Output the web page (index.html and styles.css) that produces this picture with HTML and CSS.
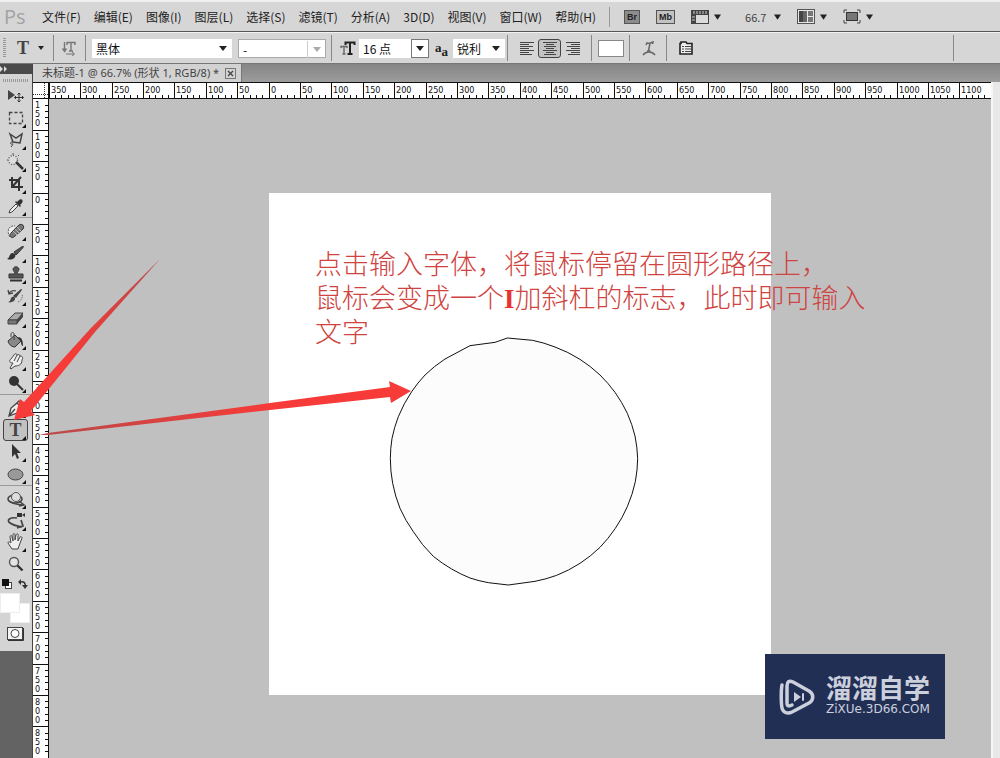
FILE: index.html
```html
<!DOCTYPE html>
<html lang="zh-CN">
<head>
<meta charset="utf-8">
<title>Ps</title>
<link rel="stylesheet" href="styles.css">
</head>
<body>
<div class="app">
  <header class="menubar">
    <span class="brand">Ps</span>
    <nav class="menus">
      <button class="menu">文件(F)</button><button class="menu">编辑(E)</button><button class="menu">图像(I)</button><button class="menu">图层(L)</button><button class="menu">选择(S)</button><button class="menu">滤镜(T)</button><button class="menu">分析(A)</button><button class="menu">3D(D)</button><button class="menu">视图(V)</button><button class="menu">窗口(W)</button><button class="menu">帮助(H)</button>
    </nav>
    <div class="launch">
      <button class="badge" aria-label="Bridge"><span class="br">Br</span></button>
      <button class="badge" aria-label="Mini Bridge"><span class="mb">Mb</span></button>
      <button class="drop" aria-label="查看额外内容">
        <svg width="18" height="14" viewBox="0 0 18 14"><rect x="0" y="0" width="18" height="14" fill="#444"/><rect x="5" y="5" width="12" height="8" fill="#dcdcdc"/><path d="M3 1v3M6 1v3M9 1v3M12 1v3M15 1v3M1 7h3M1 10h3" stroke="#ccc"/></svg>
        <svg class="caret" width="7" height="6" viewBox="0 0 8 6"><path d="M0 0h8L4 6z"/></svg>
      </button>
      <button class="drop zoomlevel"><span>66.7</span>
        <svg class="caret" width="7" height="6" viewBox="0 0 8 6"><path d="M0 0h8L4 6z"/></svg>
      </button>
      <button class="drop" aria-label="排列文档">
        <svg width="18" height="15" viewBox="0 0 18 15"><rect x=".5" y=".5" width="17" height="14" fill="#e8e8e8" stroke="#555"/><rect x="2" y="2" width="4" height="11" fill="#444"/><rect x="6" y="2" width="4" height="11" fill="#666"/><rect x="11" y="2" width="5" height="5" fill="#777"/><rect x="11" y="8" width="5" height="5" fill="#777"/></svg>
        <svg class="caret" width="7" height="6" viewBox="0 0 8 6"><path d="M0 0h8L4 6z"/></svg>
      </button>
      <button class="drop" aria-label="屏幕模式">
        <svg width="18" height="15" viewBox="0 0 18 15"><path d="M1 4V1h3M14 1h3v3M17 11v3h-3M4 14H1v-3" fill="none" stroke="#444"/><rect x="3.500" y="3.500" width="11" height="8" fill="#777" stroke="#333"/></svg>
        <svg class="caret" width="7" height="6" viewBox="0 0 8 6"><path d="M0 0h8L4 6z"/></svg>
      </button>
    </div>
  </header>

  <div class="options">
    <div class="opt opt-tool"><span class="grip-v"></span>
      <button class="flat"><span class="serif-t">T</span><svg class="caret" width="6" height="4" viewBox="0 0 6 4"><path d="M0 0h6L3 4z"/></svg></button>
    </div>
    <div class="opt opt-orient">
      <button class="flat" aria-label="切换文本取向"><svg width="14" height="15" viewBox="0 0 14 15" fill="none" stroke="#777"><path d="M2.500 1v9M.5 7.500l2 3 2-3M5 4V1.500h8V4M9 1.500V10M7 10h4" stroke-width="1.400"/><path d="M4 13h8M10 11l2.500 2L10 15"/></svg></button>
    </div>
    <div class="opt opt-font">
      <label class="pick pick-family"><select aria-label="字体"><option>黑体</option></select><svg class="caret" width="8" height="5" viewBox="0 0 8 5"><path d="M0 0h8L4 5z"/></svg></label>
      <label class="pick pick-style"><select aria-label="字体样式"><option>-</option></select><span class="dropbox"><svg class="caret" width="8" height="5" viewBox="0 0 8 5"><path d="M0 0h8L4 5z"/></svg></span></label>
    </div>
    <div class="opt opt-size">
      <svg width="16" height="14" viewBox="0 0 16 14" fill="none"><path d="M1 7V5.500h6V7M4 5.500V13M2.500 13h3" stroke="#666" stroke-width="1.400"/><path d="M5.500 4V1.500h9V4M10 1v11.500M7.500 13h5" stroke="#222" stroke-width="2"/></svg>
      <label class="pick pick-size"><select aria-label="字体大小"><option>16 点</option></select><span class="dropbox"><svg class="caret" width="8" height="5" viewBox="0 0 8 5"><path d="M0 0h8L4 5z"/></svg></span></label>
      <span class="aa">a<sub>a</sub></span>
      <label class="pick pick-aa"><select aria-label="消除锯齿"><option>锐利</option></select><svg class="caret" width="8" height="5" viewBox="0 0 8 5"><path d="M0 0h8L4 5z"/></svg></label>
    </div>
    <div class="opt opt-align">
      <button class="align" aria-label="左对齐"><svg width="14" height="13" viewBox="0 0 14 13"><path d="M0 .5h14M0 2.500h9M0 4.500h13M0 6.500h9M0 8.500h14M0 10.500h9M0 12.500h12" stroke="#444"/></svg></button>
      <button class="align on" aria-label="居中"><svg width="14" height="13" viewBox="0 0 14 13"><path d="M0 .5h14M3 2.500h8M1 4.500h12M3 6.500h8M0 8.500h14M3 10.500h8M1 12.500h12" stroke="#444"/></svg></button>
      <button class="align" aria-label="右对齐"><svg width="14" height="13" viewBox="0 0 14 13"><path d="M0 .5h14M5 2.500h9M1 4.500h13M5 6.500h9M0 8.500h14M5 10.500h9M2 12.500h12" stroke="#444"/></svg></button>
    </div>
    <div class="opt opt-color"><button class="textcolor" aria-label="文本颜色"></button></div>
    <div class="opt opt-warp"><button class="flat" aria-label="变形文字"><svg width="14" height="15" viewBox="0 0 14 15" fill="none" stroke="#666"><path d="M4 4l1-2c2 1 3 0 6-1l-.5 2M8 2L6.500 10M5 10h3.500" stroke-width="1.500"/><path d="M1 14c3-4 9-4 12 0" stroke-width="1.400"/></svg></button></div>
    <div class="opt opt-panel"><button class="flat" aria-label="字符面板"><svg width="14" height="14" viewBox="0 0 14 14"><path d="M1 2.500h1V1h5l1 1.500h5V13H1z" fill="#eee" stroke="#222" stroke-width="1.600"/><path d="M3 5.500h2M3 8h2M3 10.500h2M6 5.500h6M6 8h6M6 10.500h6" stroke="#444"/></svg></button></div>
  </div>

  <div class="workspace">
    <aside class="dock">
      <div class="dock-head"><svg width="8" height="6" viewBox="0 0 8 6" fill="#ddd"><path d="M0 0l3 3-3 3zM4 0l3 3-3 3z"/></svg></div>
      <div class="toolbox">
        <span class="grip-h"></span>
        <div class="tools tools-a">
          <button class="tool plain" aria-label="移动"><svg width="18" height="16" viewBox="0 0 18 16"><path d="M1 2v10l7-5z" fill="#444"/><path d="M12 5v9M7.500 9.500h9M10.500 6.500L12 5l1.500 1.500M10.500 12.500L12 14l1.500-1.500M9 8L7.500 9.500 9 11M15 8l1.500 1.500L15 11" fill="none" stroke="#333"/></svg></button>
          <button class="tool" aria-label="矩形选框"><svg width="16" height="14" viewBox="0 0 16 14"><rect x="1.500" y="1.500" width="13" height="11" fill="none" stroke="#444" stroke-width="1.300" stroke-dasharray="3 2"/></svg></button>
          <button class="tool" aria-label="套索"><svg width="16" height="16" viewBox="0 0 16 16"><path d="M2 2l6 4 6-4-2 9-7-1z" fill="none" stroke="#444" stroke-width="1.500"/><path d="M5 10c-3-1-3 3-1 2s0 2-1 3" fill="none" stroke="#444"/></svg></button>
          <button class="tool" aria-label="快速选择"><svg width="18" height="18" viewBox="0 0 18 18"><circle cx="6" cy="7" r="4.500" fill="#ddd" stroke="#555" stroke-width="1.400" stroke-dasharray="1 1.600"/><path d="M9 9l7 7" stroke="#333" stroke-width="2.500"/><path d="M6 0v2M12 2l-1 1M0 7h1" stroke="#555"/></svg></button>
          <button class="tool" aria-label="裁剪"><svg width="16" height="16" viewBox="0 0 16 16"><path d="M4 1v10h11M1 4h10v11M13 1L4 11" fill="none" stroke="#333" stroke-width="2"/></svg></button>
          <button class="tool" aria-label="吸管"><svg width="16" height="16" viewBox="0 0 16 16"><path d="M1 15l1-3 6-6 2 2-6 6z" fill="#eee" stroke="#444"/><path d="M7 4l5 5 1-1-1-1 2-2c2-3-1-5-3-3L9 4 8 3z" fill="#333"/></svg></button>
        </div>
        <div class="tools tools-b">
          <button class="tool" aria-label="修复画笔"><svg width="18" height="16" viewBox="0 0 18 16"><path d="M3 14C-1 8 2 2 8 3" fill="#eee" stroke="#555" stroke-dasharray="2 1"/><path d="M4 14c-2-2-1-3 0-4l8-8c3-2 6 1 4 4l-8 7c-2 2-3 2-4 1z" fill="#777" stroke="#333"/><path d="M8 6l4 4M6 8l4 4M10 4l4 4" stroke="#bbb"/></svg></button>
          <button class="tool" aria-label="画笔"><svg width="18" height="14" viewBox="0 0 18 14"><path d="M0 13c3-1 2-5 5-6 3 0 4 2 3 4-2 3-5 3-8 2z" fill="#333"/><path d="M7 6L16 0c1 1 0 2-7 9z" fill="#555" stroke="#333"/></svg></button>
          <button class="tool" aria-label="仿制图章"><svg width="16" height="16" viewBox="0 0 16 16"><path d="M7 8c0-2-2-3-2-5 1-3 5-3 6 0 0 2-2 3-2 5h6v4H1V8z" fill="#555" stroke="#333"/><path d="M2 14.500h12" stroke="#333" stroke-width="2"/></svg></button>
          <button class="tool" aria-label="历史记录画笔"><svg width="18" height="16" viewBox="0 0 18 16"><path d="M1 14c3 0 2-4 4-5 3-1 4 2 2 4-2 1-4 2-6 1zM6 8l8-7c2 0 1 1-5 9z" fill="#444"/><path d="M2 6c1-3 4-4 7-3M1 2l1 4 4-1" fill="none" stroke="#444" stroke-width="1.300"/><path d="M11 14c4-2 5-5 4-8" fill="none" stroke="#555" stroke-dasharray="1 1"/></svg></button>
          <button class="tool" aria-label="橡皮擦"><svg width="17" height="14" viewBox="0 0 17 14"><path d="M1 9l7-7h8l-6 7z" fill="#aaa" stroke="#444"/><path d="M1 9h9v4H1z" fill="#777" stroke="#444"/><path d="M10 9l6-7v4l-6 7z" fill="#444"/></svg></button>
          <button class="tool" aria-label="油漆桶"><svg width="17" height="16" viewBox="0 0 17 16"><path d="M1 9l7-6 6 6-6 6c-3 0-6-2-7-6z" fill="#888" stroke="#333"/><path d="M7 8V2c0-2-3-2-3 0v3" fill="none" stroke="#444"/><path d="M11 5c4 0 5 4 5 9-3-1-1-5-4-7z" fill="#333"/></svg></button>
          <button class="tool" aria-label="涂抹"><svg width="16" height="17" viewBox="0 0 16 17"><path d="M2 15l3-5c-4 0-4-3-2-4L6 2c1-2 3-1 3 0 2-1 3 0 3 1 3 0 3 2 2 4 0 5-4 6-7 6l-4 3z" fill="#eee" stroke="#444"/><path d="M9 2L6 8M12 3L9 9" stroke="#444"/></svg></button>
          <button class="tool" aria-label="减淡"><svg width="16" height="16" viewBox="0 0 16 16"><circle cx="6" cy="6" r="5" fill="#333"/><path d="M9 9l6 6" stroke="#333" stroke-width="2"/></svg></button>
        </div>
        <div class="tools tools-c">
          <button class="tool" aria-label="钢笔"><svg width="16" height="17" viewBox="0 0 16 17"><path d="M1 16l2-8 6-5 4 4-4 6zM1 16l6-7M9 3l2-2 4 4-2 2" fill="#eee" stroke="#444" stroke-width="1.300"/></svg></button>
          <button class="tool on" aria-label="横排文字"><span class="serif-t">T</span></button>
          <button class="tool" aria-label="路径选择"><svg width="14" height="16" viewBox="0 0 14 16"><path d="M3 0v13l3-3 2 5 2-1-2-5h4z" fill="#333"/></svg></button>
          <button class="tool" aria-label="椭圆"><svg width="17" height="13" viewBox="0 0 17 13"><ellipse cx="8.500" cy="6.500" rx="7.500" ry="5.500" fill="#999" stroke="#444"/></svg></button>
        </div>
        <div class="tools tools-d">
          <button class="tool" aria-label="3D 旋转"><svg width="18" height="16" viewBox="0 0 18 16"><ellipse cx="8" cy="8" rx="7" ry="4" fill="none" stroke="#444" stroke-width="1.600"/><circle cx="9" cy="6" r="4.500" fill="#ddd" stroke="#555"/><path d="M2 10c5 4 9 3 13 4M12 10l5 4-5 1" fill="none" stroke="#444" stroke-width="1.600"/></svg></button>
          <button class="tool" aria-label="3D 相机"><svg width="18" height="18" viewBox="0 0 18 18"><path d="M10 6C3 5-1 8 3 11s8 3 12 4M14 8l2 6-6 2" fill="none" stroke="#444" stroke-width="1.700"/><path d="M10 1h5v4h-5zM15 3l3-2v4z" fill="#333"/></svg></button>
          <button class="tool" aria-label="抓手"><svg width="17" height="18" viewBox="0 0 17 18"><path d="M5 16L1 10c0-2 2-1 3 0L3 4c0-2 2-2 2 0l1 4V2c0-2 2-2 2 0v5l1-5c1-2 3-1 2 1v5l2-4c1-1 2 0 2 1l-3 8-1 3z" fill="#eee" stroke="#444"/></svg></button>
          <button class="tool plain" aria-label="缩放"><svg width="16" height="16" viewBox="0 0 16 16"><circle cx="6" cy="6" r="4.500" fill="#e4e4e4" stroke="#555" stroke-width="1.400"/><path d="M9.500 9.500l5 5" stroke="#333" stroke-width="2.400"/></svg></button>
        </div>
        <div class="swap">
          <svg width="10" height="10" viewBox="0 0 10 10"><rect x="3.500" y="3.500" width="6" height="6" fill="#fff" stroke="#444"/><rect width="7" height="7" fill="#111"/></svg>
          <svg width="10" height="10" viewBox="0 0 10 10"><path d="M2 3c4-1 6 1 5 5" fill="none" stroke="#333" stroke-width="1.500"/><path d="M3 0v6L0 3zM4 6h6L7 10z" fill="#333"/></svg>
        </div>
        <div class="swatches"><button class="swatch back" aria-label="背景色"></button><button class="swatch front" aria-label="前景色"></button></div>
        <button class="mask" aria-label="快速蒙版"><svg width="17" height="14" viewBox="0 0 17 14"><rect x=".5" y=".5" width="15" height="12" fill="#f4f4f4" stroke="#444"/><circle cx="8" cy="6.500" r="4" fill="#fff" stroke="#444"/><path d="M16.500 1v12.500H1" fill="none" stroke="#333"/></svg></button>
      </div>
    </aside>

    <main class="document">
      <div class="tabs">
        <div class="tab"><span>未标题-1 @ 66.7% (形状 1, RGB/8) *</span><button class="close" aria-label="关闭"><svg width="7" height="7" viewBox="0 0 7 7"><path d="M1 1l5 5M6 1L1 6" stroke="#444" stroke-width="1.300"/></svg></button></div>
      </div>
      <div class="view">
        <svg class="corner" width="16" height="17" viewBox="0 0 16 17"><path d="M0 .5h16M15.500 0v17M0 16.500h16" stroke="#111"/><path d="M11.500 1v16M0 12.500h15" stroke="#333" stroke-dasharray="1 1"/></svg>
        <svg class="ruler" id="ruler-x"></svg>
        <svg class="ruler" id="ruler-y"></svg>
        <div class="canvas">
          <div class="paper">
            <svg class="shape" viewBox="-333 -411 1506 1506"><path d="M382 24L458 31A400 400 0 0 1 525 51A400 400 0 0 1 600 88A400 400 0 0 1 660 135A400 400 0 0 1 705 187A400 400 0 0 1 742 250A400 400 0 0 1 765 318A400 400 0 0 1 773 385A400 400 0 0 1 766 455A400 400 0 0 1 742 530A400 400 0 0 1 706 595A400 400 0 0 1 660 652A400 400 0 0 1 600 700A400 400 0 0 1 530 736A400 400 0 0 1 465 754L385 765L325 758A400 400 0 0 1 270 744A400 400 0 0 1 215 717A400 400 0 0 1 160 679A400 400 0 0 1 100 605A400 400 0 0 1 60 535A400 400 0 0 1 38 460A400 400 0 0 1 31 385A400 400 0 0 1 36 325A400 400 0 0 1 55 260A400 400 0 0 1 95 185A400 400 0 0 1 135 135A400 400 0 0 1 195 87L270 47L345 37z" fill="#fcfcfc" stroke="#111" stroke-width="3"/></svg>
            <p class="note">点击输入字体，将鼠标停留在圆形路径上，<br>鼠标会变成一个<b>I</b>加斜杠的标志，此时即可输入<br>文字</p>
          </div>
        </div>
        <div class="scroll"></div>
      </div>
    </main>
  </div>

  <svg class="arrows" width="420" height="450" viewBox="0 0 420 450">
    <defs>
      <linearGradient id="g1" gradientUnits="userSpaceOnUse" x1="159" y1="260" x2="70" y2="358"><stop offset="0" stop-color="#b84a4a"/><stop offset="1" stop-color="#f63b38"/></linearGradient>
      <linearGradient id="g2" gradientUnits="userSpaceOnUse" x1="39" y1="435" x2="270" y2="407"><stop offset="0" stop-color="#b84a4a"/><stop offset="1" stop-color="#f63b38"/></linearGradient>
    </defs>
    <path d="M160 259L91 328 24 402 20 399 14 420 35 415 31 411 95 332z" fill="url(#g1)"/>
    <path d="M39 435L48 433 270 403 390 387 389 381 411 391 391 403 390 397 270 410 48 435z" fill="url(#g2)"/>
  </svg>

  <div class="watermark">
    <svg width="36" height="38" viewBox="0 0 36 38" fill="none" stroke="#ccd0dd" stroke-linecap="round" stroke-linejoin="round"><path d="M3 7c-1 5-1 18 0 23 1 5 6 6 10 4l17-9c5-3 5-9 0-12L14 4C10 2 8 4 8 8v17c0 4 3 3 5 2" stroke-width="3.500"/><path d="M15 14v10l7-5z" fill="#ccd0dd" stroke="none"/><path d="M24 16v6" stroke-width="2"/></svg>
    <div class="wm-text"><strong>溜溜自学</strong><span>ZiXUe.3D66.COM</span></div>
  </div>
</div>
<script src="rulers.js"></script>
</body>
</html>
```
FILE: rulers.js
```js
const NS = 'http://www.w3.org/2000/svg';
const UNIT = 0.628;

function add(parent, tag, attrs, text) {
  const el = document.createElementNS(NS, tag);
  for (const k in attrs) el.setAttribute(k, attrs[k]);
  if (text !== undefined) el.textContent = text;
  parent.appendChild(el);
  return el;
}

function ruler(id, origin, first, vertical) {
  const svg = document.getElementById(id);
  const box = svg.getBoundingClientRect();
  const length = vertical ? box.height : box.width;
  svg.replaceChildren();
  let ticks = '';
  for (let v = first; origin + v * UNIT < length; v += 10) {
    const p = Math.floor(origin + v * UNIT) + 0.5;
    const major = v % 50 === 0;
    const start = major ? 0 : 12;
    ticks += vertical ? `M${start} ${p}H16` : `M${p} ${start}V17`;
    if (!major || p + 29 > length) continue;
    const label = String(Math.abs(v));
    if (vertical) {
      const t = add(svg, 'text', {});
      [...label].forEach((d, i) => add(t, 'tspan', { x: 2, y: Math.floor(p) + 10 + i * 9 }, d));
    } else {
      add(svg, 'text', { x: Math.floor(p) + 2, y: 10 }, label);
    }
  }
  add(svg, 'path', { d: ticks, class: 'ticks' });
}

function draw() {
  ruler('ruler-x', 220, -350, false);
  ruler('ruler-y', 94, -150, true);
}

draw();
window.addEventListener('resize', draw);
```
FILE: styles.css
```css
* { box-sizing: border-box; }
body { margin: 0; font-family: "Noto Sans CJK SC", sans-serif; font-size: 12px; color: #222; }
button { border: 0; padding: 0; background: none; font: inherit; color: inherit; }
svg { display: block; flex: none; }
.app { position: relative; display: flex; flex-direction: column; height: 100vh; overflow: hidden; background: #c0c0c0; }

.menubar { display: flex; align-items: center; flex: none; height: 32px; padding: 0 0 0 4px; border-top: 2px solid #eef1f0; border-bottom: 1px solid #555; background: #d6d6d6; }
.brand { width: 31px; font: 20px "Open Sans", sans-serif; color: #a2a2a2; }
.menus { display: flex; gap: 13px; padding-left: 7px; }
.menu { white-space: nowrap; font-size: 12px; }
.launch { display: flex; align-items: center; height: 20px; margin-left: 13px; padding-left: 14px; border-left: 1px solid #999; }
.badge { display: flex; margin-right: 16px; }
.br, .mb { display: block; height: 14px; padding: 0 2px; border: 1px solid #555; background: #8c8c8c; font: bold 9px/12px "Liberation Sans", sans-serif; color: #222; }
.mb { background: #c2c2c2; }
.drop { display: flex; align-items: center; gap: 5px; margin-right: 16px; color: #444; }
.zoomlevel { gap: 8px; margin-left: 8px; font-size: 11px; }
.caret { fill: #222; }

.options { display: flex; align-items: center; flex: none; height: 32px; border-top: 1px solid #f2f2f2; border-bottom: 1px solid #777; background: #d6d6d6; }
.opt { display: flex; align-items: center; height: 26px; border-right: 1px solid #888; }
.flat { display: flex; align-items: center; gap: 9px; }
.serif-t { font: bold 18px/18px "Liberation Serif", serif; color: #444; }
.opt-tool { width: 54px; padding-left: 3px; gap: 11px; }
.grip-v { width: 3px; height: 20px; background: repeating-linear-gradient(#999 0 1px, #d6d6d6 1px 2px); }
.opt-orient { width: 32px; padding-left: 8px; }
.opt-font { width: 246px; padding-left: 6px; gap: 6px; }
.opt-size { width: 176px; padding-left: 8px; gap: 3px; }
.opt-align { width: 84px; padding-left: 7px; }
.opt-color { width: 38px; padding-left: 6px; }
.opt-warp { width: 37px; padding-left: 12px; }
.opt-panel { width: 287px; padding-left: 12px; }
.pick { display: grid; grid-template-columns: 1fr 18px; align-items: center; justify-items: center; height: 19px; background: #fff; }
.pick select { grid-area: 1 / 1 / 2 / 3; width: 100%; height: 19px; padding: 0 0 0 4px; border: 0; border-radius: 0; appearance: none; background: transparent; font: 12px/19px "Noto Sans CJK SC", sans-serif; color: #111; }
.pick > .caret, .dropbox { grid-area: 1 / 2 / 2 / 3; pointer-events: none; }
.dropbox { display: grid; place-items: center; width: 18px; height: 19px; border: 1px solid #777; }
.pick-family { width: 140px; }
.pick-style { width: 88px; border: 1px solid #aaa; }
.pick-style .dropbox { height: 17px; border-width: 0 0 0 1px; border-color: #ccc; }
.pick-style .caret { fill: #aaa; }
.pick-size { width: 70px; }
.pick-aa { width: 52px; }
.aa { width: 18px; padding-left: 3px; white-space: nowrap; font: bold 13px/14px "Liberation Serif", serif; }
.aa sub { font-size: 13px; line-height: 1px; }
.align { display: grid; place-items: center; width: 23px; height: 19px; border: 1px solid transparent; border-radius: 3px; }
.align.on { border-color: #444; background: #c4c4c4; }
.textcolor { width: 26px; height: 17px; border: 1px solid #888; background: #fff; }

.workspace { display: grid; grid-template-columns: 33px 1fr; flex: 1; min-height: 0; }
.dock { min-height: 0; overflow: hidden; border-right: 1px solid #444; background: #636363; }
.dock-head { display: flex; align-items: center; height: 10px; background: #4a4a4a; }
.toolbox { padding: 5px 0 10px; background: #d4d4d4; }
.grip-h { display: block; width: 26px; height: 3px; margin: 0 0 3px 3px; background: repeating-linear-gradient(90deg, #999 0 1px, #d4d4d4 1px 2px); }
.tools { display: flex; flex-direction: column; padding-left: 3px; border-bottom: 1px solid #999; margin-bottom: 2px; }
.tools-a { height: 133px; }
.tools-b { height: 175px; }
.tools-c { height: 89px; }
.tools-d { height: 87px; border: 0; margin: 0; }
.tool { display: grid; flex: 1; place-items: center; position: relative; width: 25px; min-height: 0; border: 1px solid transparent; border-radius: 3px; }
.tool:not(.plain)::after { content: ""; position: absolute; right: 1px; bottom: 0; border: 2px solid; border-color: transparent #111 #111 transparent; }
.tool.on { border-color: #444; background: #c2c2c2; }
.swap { display: flex; gap: 6px; height: 18px; padding: 4px 2px; }
.swatches { display: grid; grid-template: 10px 19px / 10px 20px; height: 30px; }
.swatch { width: 20px; height: 20px; background: #fff; border: 1px solid #eee; }
.back { grid-area: 2 / 2; }
.front { grid-area: 1 / 1; z-index: 1; }
.mask { display: block; margin: 4px 0 0 7px; }

.document { display: flex; flex-direction: column; min-width: 0; min-height: 0; }
.tabs { display: flex; flex: none; height: 18px; background: linear-gradient(#858585, #9c9c9c); }
.tab { display: flex; align-items: center; gap: 6px; padding: 0 5px 0 9px; border-right: 1px solid #777; background: #d2d2d2; font: 11px/18px "Noto Sans", "Noto Sans CJK SC", sans-serif; color: #444; white-space: nowrap; }
.close { display: grid; place-items: center; width: 11px; height: 11px; border: 1px solid #777; }
.view { display: grid; grid-template: 17px 1fr / 16px 1fr 9px; flex: 1; min-height: 0; }
.corner, .ruler { background: #fff; }
.ruler { width: 100%; height: 100%; overflow: hidden; font: 9px "DejaVu Sans Condensed", "DejaVu Sans", sans-serif; fill: #111; }
#ruler-x { border-top: 1px solid #111; border-bottom: 1px solid #111; }
#ruler-y { border-right: 1px solid #111; grid-area: 2 / 1; }
.ticks { stroke: #111; }
.canvas { grid-area: 2 / 2; display: flex; justify-content: center; align-items: flex-start; padding-top: 94px; min-height: 0; overflow: hidden; background: #c0c0c0; }
.paper { position: relative; flex: none; width: 502px; height: 502px; background: #fff; }
.shape { width: 100%; height: 100%; }
.note { position: absolute; left: 46px; top: 53px; margin: 0; font-size: 27px; font-weight: 300; line-height: 34px; white-space: nowrap; color: #cf4340; }
.note b { font: bold 27px/1px "Liberation Serif", serif; color: #e8322e; }
.scroll { grid-area: 1 / 3 / 3 / 4; border-left: 2px solid #f6f6f6; background: #e8e8e8; }

.arrows { position: absolute; left: 0; top: 0; pointer-events: none; }
.watermark { position: absolute; right: 55px; bottom: 19px; display: flex; align-items: center; gap: 11px; width: 180px; height: 85px; padding-left: 14px; background: #222f55; color: #ccd0dd; }
.wm-text { display: flex; flex-direction: column; gap: 3px; padding-bottom: 4px; white-space: nowrap; }
.wm-text strong { font-size: 26px; line-height: 26px; font-weight: 700; }
.wm-text span { font: 12px/12px "DejaVu Sans", sans-serif; }
```
